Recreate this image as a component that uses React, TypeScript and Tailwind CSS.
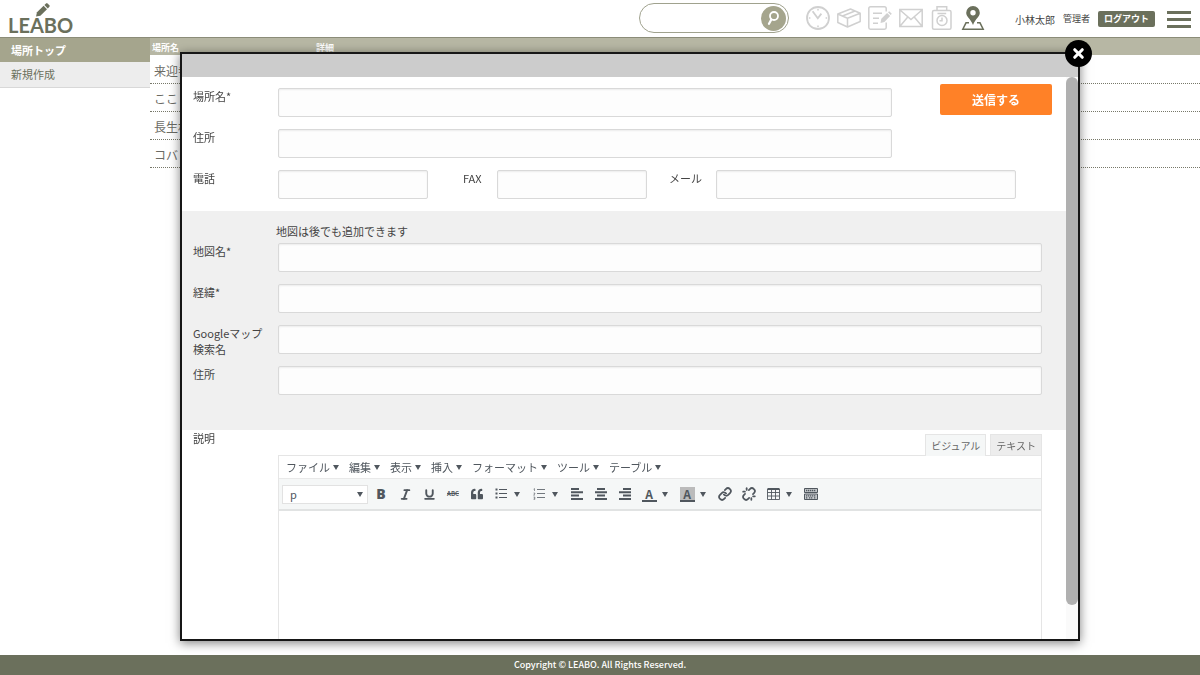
import React from 'react';
import { Italic, Link, Underline, Unlink, X } from 'lucide-react';
import { FaQuoteLeft } from 'react-icons/fa';

const places = ['来迎寺', 'ここ', '長生村', 'コバ'];

const menus = ['ファイル', '編集', '表示', '挿入', 'フォーマット', 'ツール', 'テーブル'];

const mapFields = [
    { id: 'map-name', label: '地図名*' },
    { id: 'lat-lng', label: '経緯*' },
    { id: 'google-name', label: 'Googleマップ検索名' },
    { id: 'map-address', label: '住所' },
];

const fieldClass =
    'block h-[29px] min-w-0 rounded-[2px] border border-[#d9d9d9] bg-[#fdfdfd] px-2 text-[11px] shadow-[inset_0_1px_2px_rgba(0,0,0,0.07)] outline-none';

function Caret() {
    return (
        <svg viewBox="0 0 6 5" className="h-[5px] w-[6px] shrink-0" fill="#50575e" aria-hidden="true">
            <path d="M0 0h6L3 5z" />
        </svg>
    );
}

/* Header */

function Logo() {
    return (
        <a href="#" className="relative ml-2 mt-[13px] block font-[Lato,sans-serif] text-[20px] font-bold leading-6 text-[#6b705c]">
            LEABO
            <svg viewBox="0 0 14 14" className="absolute -top-[10px] left-[28px] h-[14px] w-[14px]" fill="#6b705c" aria-hidden="true">
                <path d="M0 13.5 1 9.2 7.6 2.8l3.4 3.4-6.6 6.5z" />
                <path d="m8.4 2 1.7-1.6q.7-.6 1.4 0l1.9 1.9q.6.7 0 1.4l-1.6 1.7z" />
            </svg>
        </a>
    );
}

function NavIcon({ label, active = false, children }: { label: string; active?: boolean; children: React.ReactNode }) {
    return (
        <a href="#" aria-label={label} className={active ? 'text-[#6b705c]' : 'text-[#d0d0d0]'}>
            <svg viewBox="0 0 24 24" className="h-6 w-6" fill="none" stroke="currentColor" strokeWidth="1.5">
                {children}
            </svg>
        </a>
    );
}

function Header() {
    return (
        <header className="flex h-[38px] items-start border-b border-[#8b8c78] bg-white">
            <Logo />
            <form className="ml-auto mt-[3px] flex h-[30px] w-[150px] items-center rounded-full border border-[#a0a28e] pr-[2px]" role="search">
                <input aria-label="検索" className="h-6 min-w-0 flex-1 rounded-full pl-3 text-[11px] outline-none" />
                <button type="button" aria-label="検索する" className="flex h-[25px] w-[25px] items-center justify-center rounded-full bg-[#a5a58d]">
                    <svg viewBox="0 0 14 14" className="h-[14px] w-[14px]" fill="none" stroke="#fff" strokeLinecap="round">
                        <circle cx="8" cy="5" r="4" strokeWidth="1.8" />
                        <path d="M5.4 8.4 3 12.8" strokeWidth="2.2" />
                    </svg>
                </button>
            </form>

            <nav className="ml-[17px] mt-[6px] flex gap-[7px]">
                <NavIcon label="時計">
                    <circle cx="12" cy="12" r="11" strokeWidth="1.8" />
                    <path d="m6.6 5.2 5.2 7 3.6-4.6" strokeWidth="1.8" />
                    <path d="M12 2.8v1.6M12 19.6v1.6M2.8 12h1.6M19.6 12h1.6" />
                </NavIcon>
                <NavIcon label="箱">
                    <path
                        d="M.8 8 13.500 3l9.700 4.200v8.300L10.500 21 .8 16.500zM.8 8l9.700 4.300L23.200 7.200M10.500 12.300V21M5.500 10l12.500-5"
                        strokeLinejoin="round"
                    />
                </NavIcon>
                <NavIcon label="メモ">
                    <path d="M18.200 5.500V2.500q0-1.700-1.700-1.700H2.500Q.8.800.8 2.500v19q0 1.700 1.700 1.700h14q1.700 0 1.700-1.700v-5M5 7.300h9M5 12.300h6M5 17.300h5" />
                    <path d="m12.500 17 .8-4.200 5.800-5.700 3 3-5.700 5.900zM20 6.200l1.200-1 2.600 2.600-1.100 1.300z" fill="currentColor" stroke="none" />
                </NavIcon>
                <NavIcon label="メール">
                    <path d="M.8 3.500h22.400v17H.8zM1 4l11 9.500L23 4M1 20.300l7.800-9.200M23 20.300l-7.800-9.200" />
                </NavIcon>
                <NavIcon label="タイムカード">
                    <rect x="2.500" y="4.500" width="18.500" height="18.700" rx="1.500" />
                    <path d="M7 4.500V.8h9.700v3.700M7.500 7.500h8.700" />
                    <circle cx="12" cy="14.500" r="5" />
                    <path d="M12 11.500v3.200H9.500" />
                </NavIcon>
                <NavIcon label="場所" active>
                    <path
                        d="M12 0a6.800 6.800 0 0 0-6.800 6.800C5.200 11 9.500 12.500 12 19c2.500-6.500 6.800-8 6.800-12.200A6.800 6.800 0 0 0 12 0zm0 4a2.700 2.700 0 1 1 0 5.400A2.700 2.700 0 0 1 12 4z"
                        fill="currentColor"
                        fillRule="evenodd"
                        stroke="none"
                    />
                    <path d="M8 16.800H5l-3.200 6.400h20.400L19 16.800h-3" />
                </NavIcon>
            </nav>

            <div className="mt-[11px] ml-[30px] flex h-4 items-center text-[#444]">
                <span className="text-[10px]">小林太郎</span>
                <span className="ml-2 text-[9px]">管理者</span>
                <button type="button" className="ml-2 h-4 rounded-[2px] bg-[#6b705c] px-[6px] text-[9px] leading-4 font-bold text-white">
                    ログアウト
                </button>
            </div>
            <button type="button" aria-label="メニュー" className="mt-[11px] mr-[9px] ml-3 flex w-6 flex-col gap-1">
                <span className="h-[3px] w-full bg-[#6b705c]" />
                <span className="h-[3px] w-full bg-[#6b705c]" />
                <span className="h-[3px] w-full bg-[#6b705c]" />
            </button>
        </header>
    );
}

/* Page behind the dialog */

function Sidebar() {
    return (
        <aside className="w-[150px] shrink-0 text-[11px]">
            <a href="#" className="block h-6 bg-[#a5a58d] pl-[11px] leading-6 font-bold text-white">
                場所トップ
            </a>
            <a href="#" className="block h-[26px] border-b border-[#d8d8d8] bg-[#ededed] pl-[11px] leading-[25px] text-[#6b705c]">
                新規作成
            </a>
        </aside>
    );
}

function PlaceTable() {
    return (
        <table className="w-full table-fixed border-collapse self-start text-left">
            <thead>
                <tr className="h-[17px] bg-[#b7b7a4] text-[9px] text-white">
                    <th className="w-[164px] p-0 pt-[3px] pl-[2px] leading-[14px]">場所名</th>
                    <th className="p-0 pt-[3px] pl-[2px] leading-[14px]">詳細</th>
                </tr>
            </thead>
            <tbody>
                {places.map((place) => (
                    <tr key={place} className="h-7 border-b border-dotted border-[#777869] text-[12px] text-[#6b6b64]">
                        <td className="p-0 pt-1 pl-1 leading-4">{place}</td>
                        <td />
                    </tr>
                ))}
            </tbody>
        </table>
    );
}

/* Dialog form */

function Field({ id, label }: { id: string; label: string }) {
    return (
        <div className="flex items-start">
            <label htmlFor={id} className="-mb-3 w-[85px] shrink-0 pr-3">
                {label}
            </label>
            <input id={id} className={`${fieldClass} flex-1`} />
        </div>
    );
}

function ToolButton({ label, split = false, children }: { label: string; split?: boolean; children: React.ReactNode }) {
    return (
        <button
            type="button"
            aria-label={label}
            className={`flex h-6 shrink-0 items-center ${split ? 'w-[38px] gap-[5px] pl-1' : 'w-6 justify-center'}`}
        >
            <span className="flex w-4 justify-center">{children}</span>
            {split && <Caret />}
        </button>
    );
}

function Lines({ d }: { d: string }) {
    return (
        <svg viewBox="0 0 12 12" className="h-3 w-3" stroke="currentColor" strokeWidth="2" fill="none">
            <path d={d} />
        </svg>
    );
}

function Toolbar() {
    return (
        <div className="flex h-8 items-center border-b-2 border-[#e1e3e3] bg-[#f5f7f7] pl-[3px] text-[#50575e]">
            <div className="relative mr-px w-[86px]">
                <select
                    aria-label="段落"
                    className="block h-[19px] w-full appearance-none border border-[#e2e2e2] bg-white pl-[7px] text-[11px] leading-4 outline-none"
                >
                    <option>p</option>
                </select>
                <span className="pointer-events-none absolute top-[7px] right-[5px]">
                    <Caret />
                </span>
            </div>
            <ToolButton label="太字">
                <b className="font-['Open_Sans',sans-serif] text-[14px] font-extrabold">B</b>
            </ToolButton>
            <ToolButton label="斜体">
                <Italic size={13} strokeWidth={3.5} />
            </ToolButton>
            <ToolButton label="下線">
                <Underline size={13} strokeWidth={3.5} />
            </ToolButton>
            <ToolButton label="打ち消し">
                <s className="text-[6px] font-bold">ABC</s>
            </ToolButton>
            <ToolButton label="引用">
                <FaQuoteLeft size={12} />
            </ToolButton>
            <ToolButton label="箇条書き" split>
                <svg viewBox="0 0 12 12" className="h-3 w-3" stroke="currentColor">
                    <path d="M4 1.500h8M4 5.500h8M4 9.500h8" />
                    <path d="M.5 1.500h2M.5 5.500h2M.5 9.500h2" strokeWidth="2" />
                </svg>
            </ToolButton>
            <ToolButton label="番号付きリスト" split>
                <svg viewBox="0 0 12 12" className="h-3 w-3" stroke="currentColor" fill="none" strokeWidth=".8">
                    <path d="M4 1.500h8M4 5.500h8M4 9.500h8" />
                    <path d="M.6 1.200 1.500.600v2.400M.6 5h1.200v1L.6 7h1.400M.6 9h1.200v2.400H.6M.8 10.200h1" strokeWidth=".6" />
                </svg>
            </ToolButton>
            <ToolButton label="左揃え">
                <Lines d="M0 1h8M0 4.300h12M0 7.600h8M0 11h12" />
            </ToolButton>
            <ToolButton label="中央揃え">
                <Lines d="M2 1h8M0 4.300h12M2 7.600h8M0 11h12" />
            </ToolButton>
            <ToolButton label="右揃え">
                <Lines d="M4 1h8M0 4.300h12M4 7.600h8M0 11h12" />
            </ToolButton>
            <ToolButton label="文字色" split>
                <span className="h-[15px] w-[15px] shrink-0 border-b-2 border-[#50575e] text-[12px] leading-[14px] font-bold">A</span>
            </ToolButton>
            <ToolButton label="背景色" split>
                <span className="h-[15px] w-[15px] shrink-0 border-b-2 border-[#50575e] bg-[#bbb] text-[12px] leading-[14px] font-bold">A</span>
            </ToolButton>
            <ToolButton label="リンク">
                <Link size={14} strokeWidth={3} />
            </ToolButton>
            <ToolButton label="リンク解除">
                <Unlink size={14} strokeWidth={3} />
            </ToolButton>
            <ToolButton label="表" split>
                <svg viewBox="0 0 13 12" className="h-3 w-[13px]" stroke="currentColor" fill="none">
                    <path d="M.5 1h12" strokeWidth="2" />
                    <path d="M.5 1v10.500h12V1M.5 4.500h12M.5 8h12M4.500 1v10.500M8.500 1v10.500" strokeWidth=".9" />
                </svg>
            </ToolButton>
            <ToolButton label="ツールバー切り替え">
                <svg viewBox="0 0 14 12" className="h-3 w-[14px]" stroke="currentColor" fill="none">
                    <path d="M.5.500h13v4H.5zM.5 6h13v5.500H.5z" fill="#c3c7ca" />
                    <path d="M2 2.500h10M2 7.800h10M2 9.800h2M5 9.800h4M10 9.800h2" strokeWidth="1.300" strokeDasharray="1.300 .7" />
                </svg>
            </ToolButton>
        </div>
    );
}

function Editor() {
    return (
        <div className="flex min-w-0 flex-1 flex-col pt-1">
            <div className="flex justify-end gap-1 text-[10px] leading-[21px] text-[#666]">
                <button type="button" className="relative z-10 -mb-px h-[22px] border border-b-0 border-[#e5e5e5] bg-[#f5f7f7] px-[5px]">
                    ビジュアル
                </button>
                <button type="button" className="h-[21px] border border-b-0 border-[#e5e5e5] bg-[#ededed] px-[5px]">
                    テキスト
                </button>
            </div>
            <div className="flex flex-1 flex-col border border-b-0 border-[#e5e5e5]">
                <div className="flex h-[23px] items-center gap-[10px] border-b border-[#e9e9e9] pl-[7px] text-[11px] text-[#50575e]">
                    {menus.map((menu) => (
                        <button key={menu} type="button" className="flex items-center gap-[3px]">
                            {menu}
                            <Caret />
                        </button>
                    ))}
                </div>
                <Toolbar />
                <textarea id="description" className="w-full flex-1 resize-none p-2 outline-none" />
            </div>
        </div>
    );
}

function PlaceDialog() {
    return (
        <div
            role="dialog"
            aria-label="場所の新規作成"
            className="fixed top-[52px] right-[10%] bottom-[34px] left-[15%] flex flex-col border-2 border-[#161616] bg-white shadow-[0_2px_10px_rgba(0,0,0,0.5)]"
        >
            <div className="h-[23px] shrink-0 bg-[#ccc]" />
            <button
                type="button"
                aria-label="閉じる"
                className="absolute -top-[14px] -right-[14px] z-10 flex h-[27px] w-[27px] items-center justify-center rounded-full bg-black text-white"
            >
                <X size={15} strokeWidth={5} />
            </button>

            <div className="flex min-h-0 flex-1">
                <form className="flex min-w-0 flex-1 flex-col overflow-hidden text-[11px] leading-4 text-[#444]">
                    <section className="flex flex-col gap-3 pt-[11px] pb-3 pl-[11px]">
                        <div className="flex items-start">
                            <div className="flex flex-1 flex-col gap-3">
                                <Field id="place-name" label="場所名*" />
                                <Field id="address" label="住所" />
                            </div>
                            <button type="button" className="-mt-1 mr-[14px] ml-12 h-[31px] w-[112px] rounded-[2px] bg-[#ff8127] text-[12px] font-bold text-white">
                                送信する
                            </button>
                        </div>
                        <div className="flex items-start pr-[50px]">
                            <label htmlFor="tel" className="w-[85px] shrink-0">電話</label>
                            <input id="tel" type="tel" className={`${fieldClass} w-[150px]`} />
                            <label htmlFor="fax" className="ml-[35px] w-[34px] shrink-0">FAX</label>
                            <input id="fax" type="tel" className={`${fieldClass} w-[150px]`} />
                            <label htmlFor="mail" className="ml-[22px] w-[47px] shrink-0">メール</label>
                            <input id="mail" type="email" className={`${fieldClass} flex-1`} />
                        </div>
                    </section>

                    <section className="bg-[#f0f0f0] pt-3 pr-6 pb-[35px] pl-[11px]">
                        <p className="mb-1 pl-[83px]">地図は後でも追加できます</p>
                        <div className="flex flex-col gap-3">
                            {mapFields.map((field) => (
                                <Field key={field.id} id={field.id} label={field.label} />
                            ))}
                        </div>
                    </section>

                    <section className="flex flex-1 pr-6 pl-[11px]">
                        <label htmlFor="description" className="w-[85px] shrink-0">説明</label>
                        <Editor />
                    </section>
                </form>
                <div className="w-3 shrink-0 bg-[#fafafa]">
                    <div className="h-[94%] rounded-full bg-[#b0b0b0]" />
                </div>
            </div>
        </div>
    );
}

export default function App() {
    return (
        <div className="flex min-h-screen flex-col bg-white font-['Noto_Sans_CJK_JP',sans-serif]">
            <Header />
            <main className="flex flex-1">
                <Sidebar />
                <PlaceTable />
            </main>
            <footer className="h-5 bg-[#6b705c] text-center text-[9px] leading-5 font-medium text-white">
                Copyright © LEABO. All Rights Reserved.
            </footer>
            <PlaceDialog />
        </div>
    );
}
